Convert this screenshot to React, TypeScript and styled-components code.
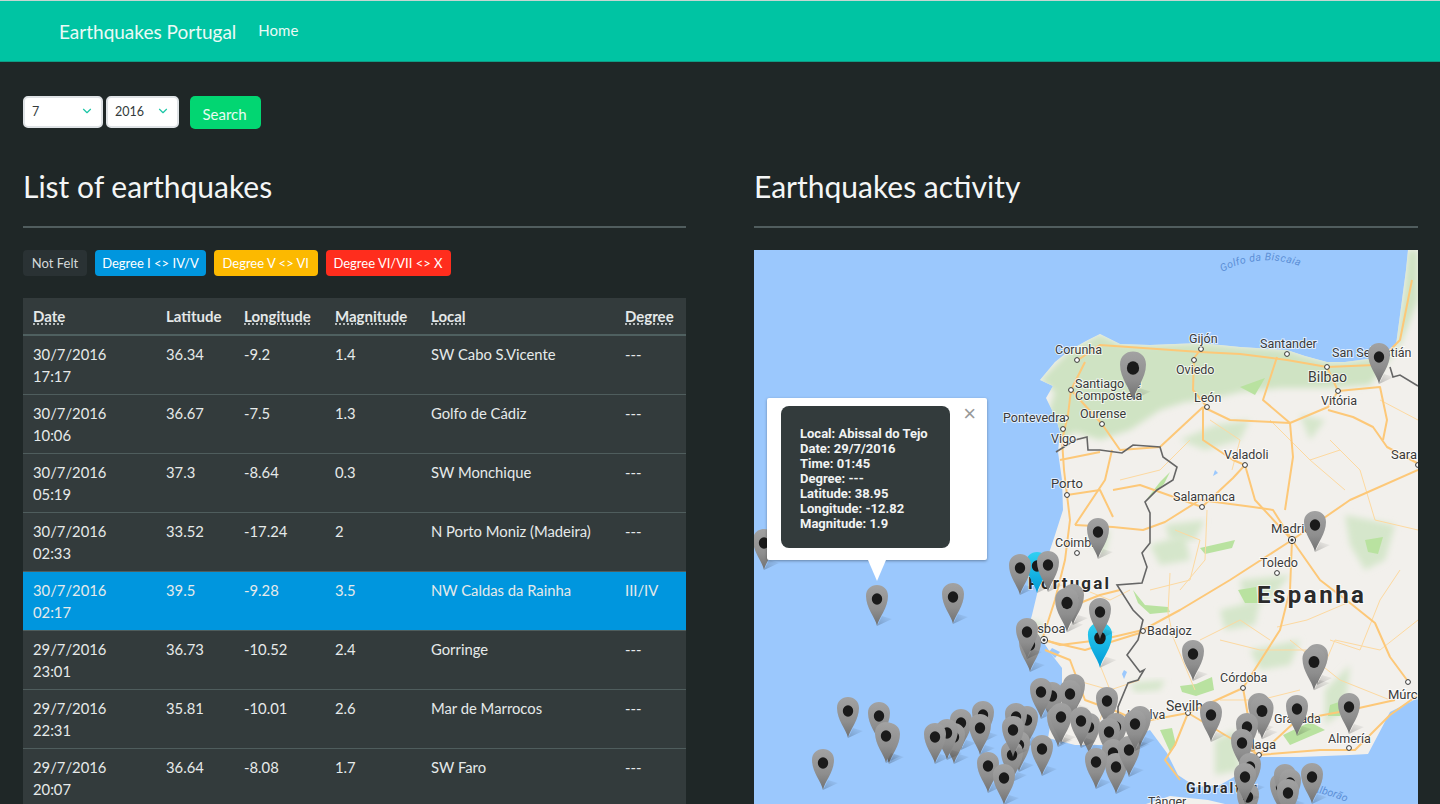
import styled, { createGlobalStyle } from 'styled-components'
import { FiChevronDown } from 'react-icons/fi'

const GlobalStyle = createGlobalStyle`
  html, body {
    margin: 0;
    height: 100%;
    overflow: hidden;
    background: #1f2727;
    font-family: 'Lato', 'Liberation Sans', sans-serif;
    color: #fff;
  }
  * { box-sizing: border-box; }
`

const Page = styled.div`
  height: 804px;
  overflow: hidden;
`

const Navbar = styled.nav`
  height: 62px;
  display: flex;
  align-items: center;
  padding: 0 0 0 59px;
  gap: 22px;
  background: #00c4a3;
  border-top: 1px solid #c5d6d2;
  border-bottom: 1px solid #0f9c85;
`

const Brand = styled.a`
  font-size: 19px;
  color: #eafaf6;
`

const NavLink = styled.a`
  font-size: 15px;
  color: #eafaf6;
  margin-bottom: 3px;
`

const Content = styled.main`
  padding: 34px 22px 0 23px;
`

const FilterForm = styled.form`
  display: flex;
  align-items: flex-start;
  height: 33px;
`

const SelectBox = styled.div<{ $width: number; $gap: number }>`
  width: ${(p) => p.$width}px;
  height: 32px;
  margin-right: ${(p) => p.$gap}px;
  padding: 0 7px 2px 7px;
  display: flex;
  align-items: center;
  justify-content: space-between;
  background: #fff;
  border: 2px solid #dfe3e6;
  border-radius: 5px;
  font-size: 12.5px;
  color: #333b3c;
  svg {
    color: #1cc6a6;
    font-size: 14px;
  }
`

const SearchButton = styled.button`
  width: 71px;
  height: 33px;
  padding: 3px 2px 0 0;
  border: none;
  border-radius: 5px;
  background: #02d672;
  color: #e9fbf2;
  font-family: inherit;
  font-size: 15px;
`

const Columns = styled.div`
  display: grid;
  grid-template-columns: 663px 664px;
  column-gap: 68px;
  margin-top: 37px;
`

const Heading = styled.h2`
  margin: 0;
  height: 62px;
  font-size: 30px;
  font-weight: 400;
  line-height: 40px;
  color: #f4f6f6;
  border-bottom: 2px solid #505d5e;
`

const Legend = styled.div`
  display: flex;
  gap: 8px;
  margin-top: 22px;
  margin-bottom: 22px;
`

const Badge = styled.span<{ $bg: string; $w: number; $color?: string }>`
  width: ${(p) => p.$w}px;
  height: 26px;
  display: flex;
  align-items: center;
  justify-content: center;
  border-radius: 4px;
  font-size: 13px;
  background: ${(p) => p.$bg};
  color: ${(p) => p.$color ?? '#fff'};
`

const Table = styled.table`
  width: 663px;
  table-layout: fixed;
  border-collapse: collapse;
  background: #333b3c;
  font-size: 14.8px;
  line-height: 22px;
`

const HeadCell = styled.th<{ $w: number; $abbr?: boolean }>`
  width: ${(p) => p.$w}px;
  height: 37px;
  padding: 0 0 0 10px;
  text-align: left;
  font-size: 15px;
  font-weight: 700;
  color: #e4e8e8;
  border-bottom: 2px solid #4f6060;
  text-decoration: ${(p) => (p.$abbr ? 'underline dotted' : 'none')};
  text-underline-offset: 2px;
`

const Row = styled.tr<{ $active?: boolean }>`
  background: ${(p) => (p.$active ? '#0096de' : 'transparent')};
`

const Cell = styled.td`
  height: 59px;
  padding: 7px 10px 7px;
  vertical-align: top;
  color: #e6eaea;
  border-bottom: 1px solid #4f5d5d;
`

const MapBox = styled.div`
  position: relative;
  height: 554px;
  margin-top: 22px;
  overflow: hidden;
  background: #9bc8fd;
`

const MapSvg = styled.svg`
  display: block;
  width: 664px;
  height: 554px;
`

const Popup = styled.div`
  position: absolute;
  left: 13px;
  top: 148px;
  width: 220px;
  height: 162px;
  padding: 8px 0 0 14px;
  background: #fff;
  border-radius: 2px;
  box-shadow: 0 1px 3px rgba(0, 0, 0, 0.35);
  &::after {
    content: '';
    position: absolute;
    left: 101px;
    top: 162px;
    border-left: 9px solid transparent;
    border-right: 9px solid transparent;
    border-top: 21px solid #fff;
  }
`

const PopupCard = styled.div`
  width: 169px;
  height: 142px;
  padding: 20px 0 0 19px;
  border-radius: 8px;
  background: #333b3c;
  color: #f1f3f3;
  font-family: 'Roboto', 'Liberation Sans', sans-serif;
  font-size: 13px;
  font-weight: 700;
  line-height: 15px;
`

const PopupClose = styled.span`
  position: absolute;
  right: 11px;
  top: 5px;
  font-family: 'Liberation Sans', sans-serif;
  font-size: 22px;
  line-height: 22px;
  color: #999;
`

const rows = [
  ['30/7/2016', '17:17', '36.34', '-9.2', '1.4', 'SW Cabo S.Vicente', '---'],
  ['30/7/2016', '10:06', '36.67', '-7.5', '1.3', 'Golfo de Cádiz', '---'],
  ['30/7/2016', '05:19', '37.3', '-8.64', '0.3', 'SW Monchique', '---'],
  ['30/7/2016', '02:33', '33.52', '-17.24', '2', 'N Porto Moniz (Madeira)', '---'],
  ['30/7/2016', '02:17', '39.5', '-9.28', '3.5', 'NW Caldas da Rainha', 'III/IV'],
  ['29/7/2016', '23:01', '36.73', '-10.52', '2.4', 'Gorringe', '---'],
  ['29/7/2016', '22:31', '35.81', '-10.01', '2.6', 'Mar de Marrocos', '---'],
  ['29/7/2016', '20:07', '36.64', '-8.08', '1.7', 'SW Faro', '---'],
]

const land =
  'M1408,250 L1406,270 L1402,300 L1396,345 L1375,358 L1345,362 L1327,362 L1305,356 L1287,350 L1240,347 L1200,343 L1150,345 L1120,344 L1100,334 L1088,340 L1070,350 L1055,362 L1040,380 L1053,386 L1046,398 L1052,410 L1056,418 L1060,432 L1058,452 L1062,480 L1063,510 L1055,535 L1045,565 L1038,590 L1032,615 L1027,632 L1042,640 L1052,655 L1062,668 L1062,690 L1052,715 L1048,738 L1075,745 L1110,745 L1150,730 L1167,753 L1178,775 L1196,787 L1220,785 L1234,777 L1260,757 L1300,757 L1325,756 L1350,755 L1368,754 L1378,735 L1390,712 L1418,698 L1418,250 Z'
const africa = 'M1146,804 L1170,796 L1208,800 L1225,804 Z'
const greenNorth =
  'M1408,250 L1404,290 L1396,345 L1375,358 L1345,362 L1327,362 L1305,356 L1287,350 L1240,347 L1200,343 L1150,345 L1120,344 L1100,334 L1070,350 L1040,380 L1055,392 L1049,410 L1058,442 L1075,432 L1100,440 L1130,430 L1160,410 L1185,402 L1215,398 L1240,392 L1280,388 L1330,388 L1370,385 L1400,345 L1418,300 L1418,250 Z'
// pale vegetation patches, blurred
const softGreens = [
  'M1180,440 L1215,425 L1250,420 L1240,440 L1205,450 Z',
  'M1300,415 L1325,420 L1310,440 Z',
  'M1150,545 L1185,535 L1190,560 L1160,565 Z',
  'M1165,525 L1205,520 L1195,540 L1170,540 Z',
  'M1240,580 L1290,575 L1270,600 L1245,605 Z',
  'M1220,610 L1260,600 L1255,625 L1225,630 Z',
  'M1250,650 L1300,640 L1290,665 L1260,670 Z',
  'M1345,515 L1395,525 L1385,560 L1365,570 L1350,545 Z',
  'M1325,690 L1350,665 L1345,710 L1325,725 Z',
  'M1030,620 L1045,625 L1040,640 Z',
  'M1215,740 L1235,730 L1240,770 L1215,775 Z',
  'M1130,683 L1165,680 L1160,690 L1135,692 Z',
  'M1085,540 L1110,530 L1105,555 Z',
]
// saturated green patches
const greens = [
  'M1180,686 L1196,684 L1212,677 L1214,690 L1196,696 L1182,692 Z',
  'M1200,548 L1235,540 L1232,548 L1205,554 Z',
  'M1133,590 L1145,605 L1168,607 L1170,612 L1150,614 L1138,603 Z',
  'M1238,590 L1256,587 L1258,603 L1245,603 Z',
  'M1365,540 L1383,537 L1378,554 L1368,552 Z',
  'M1330,705 L1345,700 L1340,716 L1328,716 Z',
  'M1160,730 L1172,728 L1176,745 L1170,752 Z',
  'M1146,500 L1160,482 L1170,472 L1164,484 Z',
  'M1240,387 L1265,378 L1255,395 Z',
  'M1283,735 L1310,722 L1325,730 L1290,745 Z',
]
const roads = [
  'M1042,640 L1055,600 L1065,560 L1070,520 L1067,495 L1064,470 L1062,440 L1068,415 L1071,390 L1085,362',
  'M1075,525 L1113,527 L1143,530 L1165,522 L1200,500 L1253,507 L1273,510 L1292,540',
  'M1067,495 L1100,490 L1113,517 M1113,490 L1140,485 L1202,507 L1233,478 L1245,465',
  'M1245,465 L1255,500 L1292,540',
  'M1203,407 L1203,440 L1233,460 L1245,465 M1207,407 L1193,390 L1194,358 L1201,349',
  'M1203,407 L1230,420 L1290,423 L1328,407 L1338,391 L1327,367',
  'M1338,391 L1380,387 L1387,420 L1383,440',
  'M1290,423 L1263,400 L1277,357 M1290,423 L1293,457 L1285,510',
  'M1328,410 L1353,417 L1373,427 L1387,447 L1417,463',
  'M1078,360 L1100,345 L1200,352 L1240,354 L1287,360 L1327,367 L1375,365 L1400,340 L1412,280',
  'M1071,390 L1102,424 L1120,450 L1160,447 L1203,407',
  'M1292,540 L1230,580 L1180,610 L1143,630 L1100,640 L1060,645 L1045,640',
  'M1292,540 L1290,590 L1280,630 L1243,688 L1188,713 L1140,722',
  'M1243,688 L1255,755 M1188,713 L1259,755 M1188,713 L1175,745 L1165,760 L1180,780',
  'M1045,650 L1070,660 L1085,700 L1118,712 L1140,722',
  'M1292,540 L1350,500 L1418,470',
  'M1292,540 L1320,580 L1350,603 L1375,623 L1390,657 L1407,680',
  'M1297,720 L1259,755 M1297,720 L1350,710 L1395,700 M1259,755 L1320,750 L1355,750 L1390,715 L1418,695',
  'M1112,450 L1105,480 L1075,525 M1060,460 L1100,452',
  'M1043,640 L1085,650 L1143,632 M1075,605 L1100,595 L1120,590',
]
const minorRoads = [
  'M1170,573 L1168,613 L1173,637 L1195,690 M1150,590 L1190,580 L1200,540 L1175,530',
  'M1277,627 L1307,620 L1347,603 M1330,640 L1360,650 L1380,600 L1400,570',
  'M1290,640 L1340,680 L1390,700 M1220,640 L1260,650 L1310,650',
  'M1330,440 L1360,470 L1375,520 L1418,530 M1270,420 L1310,460 L1340,450',
  'M1210,420 L1240,440 L1232,470 M1120,480 L1160,470 L1190,440',
  'M1085,590 L1110,600 L1130,590 M1075,680 L1110,690 L1140,680 M1100,665 L1110,690 L1100,720',
  'M1200,640 L1240,620 L1270,640 M1207,510 L1205,560 L1180,590 M1310,460 L1345,490',
  'M1318,680 L1335,640 L1380,650 L1418,620 M1220,700 L1260,700 L1300,690 M1380,400 L1418,420',
]
const water = [
  'M1052,648 L1060,652 L1055,658 L1049,652 Z',
  'M1124,670 L1127,672 L1124,679 L1122,674 Z',
  'M1215,470 L1218,473 L1213,476 Z',
  'M1340,590 L1343,592 L1339,597 Z',
]
const cities = [
  [1077, 360], [1071, 390], [1102, 424], [1066, 418], [1063, 429], [1201, 349], [1194, 360],
  [1207, 407], [1287, 354], [1327, 367], [1338, 391], [1245, 465], [1418, 465], [1067, 495],
  [1077, 553], [1202, 507], [1277, 573], [1143, 631], [1243, 688], [1408, 682], [1188, 713],
  [1259, 755], [1349, 748],
]
const capitals = [[1044, 640], [1292, 540]]

type Label = [string, number, number, number?]
const labels: Label[] = [
  ['Corunha', 1055, 354], ['Gijón', 1189, 343], ['Oviedo', 1176, 374], ['Santander', 1260, 348],
  ['San Sebastián', 1332, 357], ['Bilbao', 1308, 382, 14], ['León', 1194, 402], ['Vitória', 1321, 405],
  ['Santiago de', 1075, 388], ['Compostela', 1075, 400], ['Ourense', 1080, 418], ['Pontevedra', 1003, 422],
  ['Vigo', 1051, 443], ['Valadoli', 1224, 459], ['Sara', 1391, 459, 13], ['Porto', 1051, 488, 13],
  ['Coimbra', 1055, 547], ['Salamanca', 1173, 501], ['Madrid', 1271, 533, 13], ['Toledo', 1260, 567],
  ['Lisboa', 1027, 633, 13], ['Badajoz', 1147, 635], ['Córdoba', 1220, 682], ['Múrcia', 1388, 699, 13],
  ['Sevilha', 1166, 711, 14], ['Huelva', 1127, 719], ['Granada', 1274, 723], ['Málaga', 1233, 749, 13],
  ['Almería', 1328, 743], ['Tânger', 1148, 806, 12.5],
]

const gray: [number, number, number?][] = [
  [1133, 368, 1.18], [1379, 357], [1098, 532], [1315, 525], [1020, 568], [1048, 565],
  [1073, 598], [1067, 603, 1.08], [1100, 612], [1030, 645], [1027, 632], [1193, 654],
  [1317, 658], [1314, 662, 1.05], [877, 599], [953, 597], [764, 543],
  [848, 711], [879, 716], [889, 737], [886, 736], [823, 763], [961, 723], [954, 737], [947, 733], [935, 737],
  [983, 715], [980, 728], [1027, 720], [1016, 717], [1019, 745], [1012, 755], [1013, 730], [1042, 749],
  [988, 766], [1004, 778], [1074, 688], [1070, 694], [1052, 696], [1041, 692], [1058, 720], [1061, 717],
  [1089, 727], [1081, 721], [1107, 701], [1116, 727], [1109, 732], [1113, 753], [1116, 767],
  [1129, 750], [1096, 762], [1140, 720], [1135, 724], [1211, 715], [1259, 707], [1262, 711, 1.05],
  [1247, 727], [1242, 743], [1297, 709], [1349, 707], [1250, 767], [1248, 797], [1245, 777],
  [1312, 777], [1281, 787], [1285, 778], [1290, 783], [1288, 793],
]
const blue: [number, number][] = [[1037, 566], [1100, 638]]

const Marker = ({ x, y, s = 1, fill }: { x: number; y: number; s?: number; fill: string }) => (
  <g transform={`translate(${x} ${y}) scale(${s})`}>
    <path d="M0,27 L15,20 L5,17 Z" fill="url(#pinShadow)" />
    <path
      d="M0,27 C-2,18 -11,9 -11,-3 C-11,-10 -6,-14 0,-14 C6,-14 11,-10 11,-3 C11,9 2,18 0,27 Z"
      fill={`url(#${fill})`}
    />
    <ellipse rx="5.2" ry="5.7" fill="#1a1a1a" />
  </g>
)

const MapDrawing = () => (
  <MapSvg viewBox="754 250 664 554">
    <defs>
      <linearGradient id="pinGray" x1="0" y1="0" x2="0" y2="1">
        <stop offset="0" stopColor="#a2a2a2" />
        <stop offset="0.6" stopColor="#8e8e8e" />
        <stop offset="1" stopColor="#707070" />
      </linearGradient>
      <linearGradient id="pinBlue" x1="0" y1="0" x2="0" y2="1">
        <stop offset="0" stopColor="#2fd0f2" />
        <stop offset="1" stopColor="#009ad6" />
      </linearGradient>
      <linearGradient id="pinShadow" x1="0" y1="1" x2="1" y2="0">
        <stop offset="0" stopColor="#000" stopOpacity="0.22" />
        <stop offset="1" stopColor="#000" stopOpacity="0.01" />
      </linearGradient>
      <filter id="soft" x="-20%" y="-20%" width="140%" height="140%">
        <feGaussianBlur stdDeviation="3" />
      </filter>
      <clipPath id="landClip">
        <path d={land} />
      </clipPath>
      <path id="biscay" d="M1222,272 Q1260,252 1299,266" />
      <path id="alboran" d="M1312,792 Q1335,796 1350,804" />
    </defs>
    <path d={land} fill="#f2f0ec" />
    <path d={africa} fill="#f2f0ec" />
    <g clipPath="url(#landClip)">
      <path d={greenNorth} fill="#cfe3c3" filter="url(#soft)" />
      {softGreens.map((d) => (
        <path key={d} d={d} fill="#d5e6cb" filter="url(#soft)" />
      ))}
      {greens.map((d) => (
        <path key={d} d={d} fill="#b9e2a0" />
      ))}
    </g>
    {water.map((d) => (
      <path key={d} d={d} fill="#9bc8fd" />
    ))}
    {minorRoads.map((d) => (
      <path key={d} d={d} fill="none" stroke="#fdd9a0" strokeWidth="1" />
    ))}
    {roads.map((d) => (
      <path key={d} d={d} fill="none" stroke="#fdc878" strokeWidth="2" strokeLinejoin="round" />
    ))}
    <path
      d="M1056,452 L1075,440 L1087,437 L1088,450 L1100,450 L1122,453 L1133,445 L1160,447 L1163,457 L1177,467 L1173,480 L1157,490 L1145,502 L1150,513 L1150,543 L1142,553 L1147,567 L1142,583 L1117,585 L1133,610 L1143,620 L1138,640 L1127,655 L1140,672 L1144,670 L1138,680 L1128,683 L1118,707 L1118,727"
      fill="none"
      stroke="#666"
      strokeWidth="1.6"
    />
    <path d="M1390,367 L1393,377 L1400,375 L1418,386" fill="none" stroke="#666" strokeWidth="1.6" />
    {cities.map(([x, y]) => (
      <circle key={`${x}-${y}`} cx={x} cy={y} r="2.4" fill="#fff" stroke="#333" strokeWidth="1" />
    ))}
    {capitals.map(([x, y]) => (
      <g key={x}>
        <circle cx={x} cy={y} r="3.6" fill="#fff" stroke="#333" strokeWidth="1" />
        <circle cx={x} cy={y} r="1.6" fill="#333" />
      </g>
    ))}
    <g
      fontFamily="Roboto, 'Liberation Sans', sans-serif"
      fontSize="12.5"
      fill="#3a3a3a"
      stroke="#fff"
      strokeWidth="2"
      paintOrder="stroke"
      strokeOpacity="0.7"
    >
      {labels.map(([t, x, y, size]) => (
        <text key={t} x={x} y={y} fontSize={size}>
          {t}
        </text>
      ))}
      <text x="1028" y="589" fontSize="17" fontWeight="700" letterSpacing="2.2" fill="#2b2b2b">
        Portugal
      </text>
      <text x="1257" y="603" fontSize="24" fontWeight="700" letterSpacing="2.5" fill="#2b2b2b">
        Espanha
      </text>
      <text x="1186" y="793" fontSize="14" fontWeight="700" letterSpacing="2" fill="#2b2b2b">
        Gibraltar
      </text>
    </g>
    <g fontFamily="Roboto, 'Liberation Sans', sans-serif" fontStyle="italic" fontSize="10.5" fill="#5b8fd6">
      <text letterSpacing="0.4">
        <textPath href="#biscay">Golfo da Biscaia</textPath>
      </text>
      <text>
        <textPath href="#alboran">Alborão</textPath>
      </text>
    </g>
    {blue.map(([x, y]) => (
      <Marker key={`b${x}`} x={x} y={y} s={x === 1100 ? 1.1 : 1} fill="pinBlue" />
    ))}
    {gray.map(([x, y, s]) => (
      <Marker key={`${x}-${y}`} x={x} y={y} s={s} fill="pinGray" />
    ))}
  </MapSvg>
)

const App = () => {
  return (
    <Page>
      <GlobalStyle />
      <Navbar>
        <Brand>Earthquakes Portugal</Brand>
        <NavLink>Home</NavLink>
      </Navbar>
      <Content>
        <FilterForm>
          <SelectBox $width={80} $gap={3}>
            7 <FiChevronDown />
          </SelectBox>
          <SelectBox $width={73} $gap={11}>
            2016 <FiChevronDown />
          </SelectBox>
          <SearchButton type="button">Search</SearchButton>
        </FilterForm>
        <Columns>
          <section>
            <Heading>List of earthquakes</Heading>
            <Legend>
              <Badge $bg="#2a3234" $w={64} $color="#d5dada">
                Not Felt
              </Badge>
              <Badge $bg="#0096de" $w={111}>
                Degree I {'<>'} IV/V
              </Badge>
              <Badge $bg="#fcb900" $w={103.5}>
                Degree V {'<>'} VI
              </Badge>
              <Badge $bg="#ff2d1d" $w={125}>
                Degree VI/VII {'<>'} X
              </Badge>
            </Legend>
            <Table>
              <thead>
                <tr>
                  <HeadCell $w={133} $abbr>Date</HeadCell>
                  <HeadCell $w={78}>Latitude</HeadCell>
                  <HeadCell $w={91} $abbr>Longitude</HeadCell>
                  <HeadCell $w={96} $abbr>Magnitude</HeadCell>
                  <HeadCell $w={194} $abbr>Local</HeadCell>
                  <HeadCell $w={71} $abbr>Degree</HeadCell>
                </tr>
              </thead>
              <tbody>
                {rows.map((r) => (
                  <Row key={r[0] + r[1]} $active={r[6] !== '---'}>
                    <Cell>
                      {r[0]}
                      <br />
                      {r[1]}
                    </Cell>
                    <Cell>{r[2]}</Cell>
                    <Cell>{r[3]}</Cell>
                    <Cell>{r[4]}</Cell>
                    <Cell>{r[5]}</Cell>
                    <Cell>{r[6]}</Cell>
                  </Row>
                ))}
              </tbody>
            </Table>
          </section>
          <section>
            <Heading>Earthquakes activity</Heading>
            <MapBox>
              <MapDrawing />
              <Popup>
                <PopupCard>
                  Local: Abissal do Tejo
                  <br />
                  Date: 29/7/2016
                  <br />
                  Time: 01:45
                  <br />
                  Degree: ---
                  <br />
                  Latitude: 38.95
                  <br />
                  Longitude: -12.82
                  <br />
                  Magnitude: 1.9
                </PopupCard>
                <PopupClose>×</PopupClose>
              </Popup>
            </MapBox>
          </section>
        </Columns>
      </Content>
    </Page>
  )
}

export default App
